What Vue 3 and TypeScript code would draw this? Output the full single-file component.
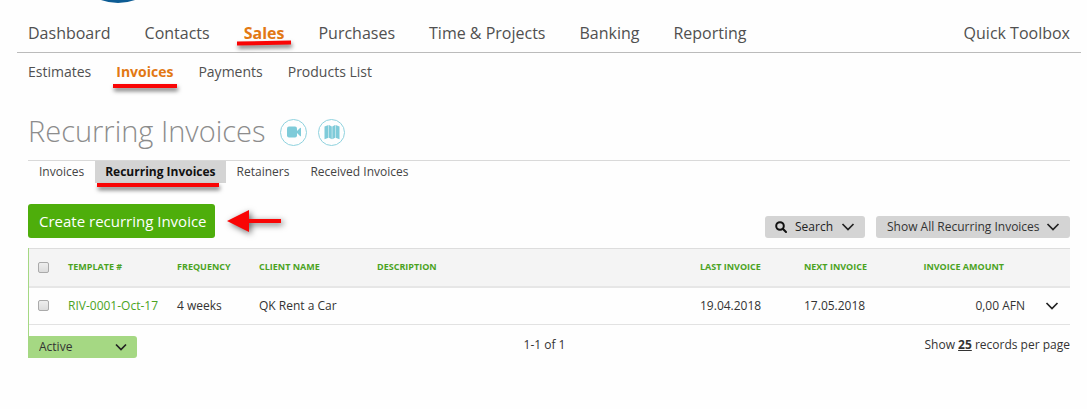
<script setup lang="ts">
import { ref } from 'vue'

interface NavItem {
  label: string
  active?: boolean
}

interface RecurringInvoice {
  template: string
  frequency: string
  client: string
  description: string
  last: string
  next: string
  amount: string
}

const mainNav: NavItem[] = [
  { label: 'Dashboard' },
  { label: 'Contacts' },
  { label: 'Sales', active: true },
  { label: 'Purchases' },
  { label: 'Time & Projects' },
  { label: 'Banking' },
  { label: 'Reporting' },
]

const subNav: NavItem[] = [
  { label: 'Estimates' },
  { label: 'Invoices', active: true },
  { label: 'Payments' },
  { label: 'Products List' },
]

const tabs: NavItem[] = [
  { label: 'Invoices' },
  { label: 'Recurring Invoices', active: true },
  { label: 'Retainers' },
  { label: 'Received Invoices' },
]

const rows: RecurringInvoice[] = [
  {
    template: 'RIV-0001-Oct-17',
    frequency: '4 weeks',
    client: 'QK Rent a Car',
    description: '',
    last: '19.04.2018',
    next: '17.05.2018',
    amount: '0,00 AFN',
  },
]

const selected = ref<string[]>([])
const allSelected = ref(false)
const status = ref('Active')
const filter = ref('Show All Recurring Invoices')
</script>

<template>
  <div class="page">
    <header>
      <div class="logo" aria-hidden="true">
        <svg width="120" height="4" viewBox="0 0 120 4"><circle cx="60" cy="-47" r="50" fill="#0d5c94" /></svg>
      </div>
      <nav class="main-nav" aria-label="Main">
        <a v-for="item in mainNav" :key="item.label" href="#" :class="{ active: item.active }">{{ item.label }}<span v-if="item.active" class="mark" /></a>
        <a href="#" class="toolbox">Quick Toolbox</a>
      </nav>
      <nav class="sub-nav" aria-label="Sales">
        <a v-for="item in subNav" :key="item.label" href="#" :class="{ active: item.active }">{{ item.label }}<span v-if="item.active" class="mark" /></a>
      </nav>
    </header>

    <main>
      <div class="title">
        <h1>Recurring Invoices</h1>
        <button type="button" class="round" aria-label="Watch video">
          <svg width="16" height="12" viewBox="0 0 16 12" fill="#7fcbd9">
            <rect x="1" y="0.500" width="10" height="11" rx="2" />
            <path d="M10 6 14 2Q15 1.300 15 2.300V9.700Q15 10.700 14 10Z" />
          </svg>
        </button>
        <button type="button" class="round" aria-label="Take a tour">
          <svg width="16" height="16" viewBox="0 0 16 16" fill="#7fcbd9">
            <path d="M0.500 2.500 4.500 1V13.800L0.500 15.300ZM5 1 7.800 2.500V15.300L5 13.800ZM8.300 2.500 11.100 1V13.800L8.300 15.300ZM11.600 1 15.500 2.500V15.300L11.600 13.800Z" />
          </svg>
        </button>
      </div>

      <nav class="tabs" aria-label="Invoice types">
        <a v-for="item in tabs" :key="item.label" href="#" :class="{ active: item.active }">{{ item.label }}<span v-if="item.active" class="mark" /></a>
      </nav>

      <div class="toolbar">
        <button type="button" class="create">Create recurring Invoice</button>
        <svg class="arrow" width="60" height="33" viewBox="0 0 60 33" aria-hidden="true">
          <path d="M3 16 25 5V14H57V18H25V27Z" fill="#f90505" />
        </svg>
        <button type="button" class="grey search">
          <svg width="12" height="12" viewBox="0 0 12 12" fill="none" stroke="#111" stroke-width="2">
            <circle cx="5" cy="5" r="3.800" />
            <path d="M7.800 7.800 11 11" stroke-linecap="round" />
          </svg>
          Search
          <svg class="chev" width="14" height="8" viewBox="0 0 14 8"><path d="M1.500 1 7 6.500 12.500 1" /></svg>
        </button>
        <div class="pick grey filter">
          <select v-model="filter" aria-label="Filter invoices">
            <option>Show All Recurring Invoices</option>
          </select>
          <svg class="chev" width="14" height="8" viewBox="0 0 14 8"><path d="M1.500 1 7 6.500 12.500 1" /></svg>
        </div>
      </div>

      <div class="list">
        <table>
          <colgroup>
            <col class="c-check" /><col class="c-template" /><col class="c-freq" /><col class="c-client" />
            <col /><col class="c-date" /><col class="c-date" /><col class="c-amount" /><col class="c-more" />
          </colgroup>
          <thead>
            <tr>
              <th class="check"><input v-model="allSelected" type="checkbox" aria-label="Select all" /></th>
              <th>TEMPLATE #</th>
              <th>FREQUENCY</th>
              <th>CLIENT NAME</th>
              <th>DESCRIPTION</th>
              <th>LAST INVOICE</th>
              <th>NEXT INVOICE</th>
              <th class="amount">INVOICE AMOUNT</th>
              <th></th>
            </tr>
          </thead>
          <tbody>
            <tr v-for="row in rows" :key="row.template">
              <td class="check"><input v-model="selected" type="checkbox" :value="row.template" :aria-label="'Select ' + row.template" /></td>
              <td><a href="#">{{ row.template }}</a></td>
              <td>{{ row.frequency }}</td>
              <td>{{ row.client }}</td>
              <td>{{ row.description }}</td>
              <td>{{ row.last }}</td>
              <td>{{ row.next }}</td>
              <td class="amount">{{ row.amount }}</td>
              <td class="more">
                <button type="button" aria-label="More actions">
                  <svg class="chev" width="14" height="8" viewBox="0 0 14 8"><path d="M1.500 1 7 6.500 12.500 1" /></svg>
                </button>
              </td>
            </tr>
          </tbody>
        </table>
        <div class="rail" />
      </div>

      <footer>
        <div class="pick status">
          <select v-model="status" aria-label="Set status">
            <option>Active</option>
          </select>
          <svg class="chev" width="12" height="8" viewBox="0 0 12 8"><path d="M1 1.500 6 6.500 11 1.500" /></svg>
        </div>
        <span class="count">1-1 of 1</span>
        <span class="per-page">Show <a href="#">25</a> records per page</span>
      </footer>
    </main>
  </div>
</template>

<style>
body {
  margin: 0;
  background: #fefefe;
}
</style>

<style scoped>
.page {
  font-family: "Open Sans", "Noto Sans", sans-serif;
  font-size: 12px;
  line-height: 20px;
  color: #333;
}
a {
  color: inherit;
  text-decoration: none;
}
button,
select {
  font: inherit;
  color: inherit;
  border: 0;
  padding: 0;
  margin: 0;
  background: none;
  cursor: pointer;
}
svg {
  display: block;
  flex: none;
}
.chev {
  fill: none;
  stroke: #222;
  stroke-width: 1.7;
}
.logo {
  height: 4px;
  padding-left: 58px;
  overflow: hidden;
}
.main-nav {
  display: flex;
  gap: 34px;
  margin: 0 6px 0 17px;
  padding: 17px 11px 7px;
  border-bottom: 1px solid #bbb;
  font-size: 16px;
  line-height: 24px;
  color: #505050;
}
.toolbox {
  margin-left: auto;
}
.sub-nav {
  display: flex;
  gap: 25px;
  padding: 9px 28px 0;
  font-size: 14px;
  color: #505050;
}
.main-nav a,
.sub-nav a,
.tabs a {
  position: relative;
  white-space: nowrap;
}
.main-nav .active,
.sub-nav .active {
  color: #e27813;
  font-weight: 700;
}
.mark {
  position: absolute;
  left: -3px;
  right: -4px;
  bottom: -6px;
  height: 4px;
  background: #f90505;
  box-shadow: 1px 3px 4px rgba(0, 0, 0, 0.55);
}
.main-nav .mark {
  left: -7px;
  right: -6px;
  bottom: 0;
  transform: rotate(-1deg);
}
main {
  padding: 0 17px 0 28px;
}
.title {
  display: flex;
  align-items: center;
  margin: 30px 0 8px;
}
h1 {
  margin: 0 15px 0 0;
  padding-bottom: 2px;
  font-size: 29px;
  font-weight: 300;
  line-height: 38px;
  color: #8c8c8c;
}
.round {
  display: flex;
  align-items: center;
  justify-content: center;
  box-sizing: border-box;
  width: 27px;
  height: 27px;
  margin-right: 11px;
  border: 1px solid #8fd2de;
  border-radius: 50%;
}
.tabs {
  display: flex;
  gap: 1px;
  padding-left: 1px;
  border-top: 1px solid #d9d9d9;
  font-size: 12px;
  line-height: 22px;
  color: #444;
}
.tabs a {
  padding: 0 10px;
}
.tabs .active {
  background: #d4d4d4;
  color: #111;
  font-weight: 700;
}
.tabs .mark {
  left: 2px;
  right: 7px;
  bottom: -4px;
}
.toolbar {
  display: flex;
  align-items: flex-end;
  margin-top: 21px;
}
.create {
  height: 34px;
  padding: 0 8px 0 11px;
  border-radius: 3px;
  background: #4eae0b;
  color: #fff;
  font-size: 15px;
}
.arrow {
  margin: 0 auto 0 9px;
  filter: drop-shadow(2px 2px 3px rgba(0, 0, 0, 0.6));
}
.grey {
  height: 22px;
  border-radius: 3px;
  background: #d4d4d4;
}
.search {
  display: flex;
  align-items: center;
  gap: 8px;
  padding: 0 10px;
  margin-right: 11px;
  color: #222;
}
.pick {
  display: grid;
  align-items: center;
  border-radius: 3px;
}
.pick > * {
  grid-area: 1 / 1;
}
.pick select {
  appearance: none;
  width: 100%;
  height: 22px;
  padding: 0 30px 0 11px;
}
.pick .chev {
  justify-self: end;
  margin-right: 10px;
  pointer-events: none;
}
.list {
  margin-top: 10px;
  border-left: 1px solid #a5d883;
}
.rail {
  height: 11px;
}
table {
  width: 100%;
  table-layout: fixed;
  border-collapse: collapse;
}
.c-check { width: 39px; }
.c-template { width: 109px; }
.c-freq { width: 82px; }
.c-client { width: 118px; }
.c-date { width: 104px; }
.c-amount { width: 117px; }
.c-more { width: 45px; }
th,
td {
  padding: 0;
  text-align: left;
  vertical-align: middle;
  white-space: nowrap;
}
thead tr {
  height: 38px;
  background: #f4f4f4;
  border-top: 1px solid #ddd;
  border-bottom: 2px solid #e6e6e6;
}
th {
  font-size: 9px;
  font-weight: 700;
  color: #4ba31f;
}
tbody tr {
  height: 38px;
  border-bottom: 1px solid #e2e2e2;
}
td a {
  color: #4ba31f;
}
.check {
  padding-left: 9px;
}
.check input {
  display: block;
  appearance: none;
  box-sizing: border-box;
  width: 11px;
  height: 11px;
  margin: 0;
  border: 1px solid #aaa;
  border-radius: 2px;
  background: linear-gradient(#eee, #dcdcdc);
}
.amount {
  text-align: right;
}
th.amount {
  padding-right: 21px;
}
.more button {
  display: block;
  margin-left: 20px;
}
footer {
  display: grid;
  grid-template-columns: 1fr auto 1fr;
  align-items: start;
  line-height: 18px;
}
.status {
  width: 109px;
  height: 22px;
  border-radius: 0 3px 3px 0;
  background: #a5d883;
}
.count {
  padding-right: 9px;
}
.per-page {
  text-align: right;
}
.per-page a {
  font-weight: 700;
  text-decoration: underline;
}
</style>
